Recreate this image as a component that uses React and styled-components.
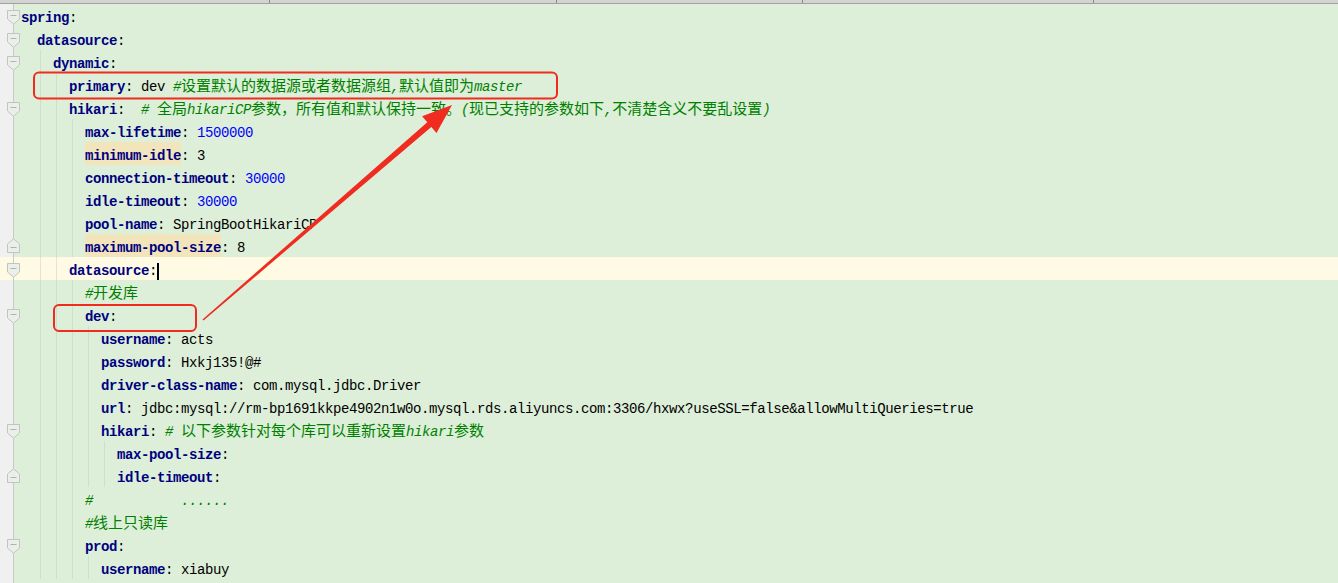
import React from 'react';
import styled, { createGlobalStyle } from 'styled-components';

const C = {
  green: '#ddefd9',
  cream: '#fefae3',
  gutter: '#f0f0f0',
  gutterLine: '#c9c9c9',
  guide: '#cde0c9',
  guideCream: '#e7e2cc',
  key: '#000080',
  num: '#0000ff',
  comment: '#008000',
  mark: '#f3e5bb',
  red: '#f02b1f',
};

const GlobalStyle = createGlobalStyle`
  *, *::before, *::after { box-sizing: border-box; }
  html, body { margin: 0; padding: 0; overflow: hidden; background: ${C.green}; }
  body { font-family: "Liberation Mono", "Noto Sans CJK SC", monospace; }
`;

const Page = styled.div`
  position: relative;
  width: 1338px;
  height: 583px;
  overflow: hidden;
  background: ${C.green};
`;

const TopBar = styled.div`
  display: flex;
  height: 4px;
  background: #d3d3d3;
  border-bottom: 1px solid #a2a2a2;
`;

const Tab = styled.div`
  flex: ${(p) => (p.$w ? 'none' : '1')};
  width: ${(p) => (p.$w ? `${p.$w}px` : 'auto')};
  border-right: ${(p) => (p.$w ? '1px solid #8a8a8a' : 'none')};
`;

const Editor = styled.div`
  display: flex;
  flex-direction: column;
`;

const Row = styled.div`
  display: flex;
  height: 23px;
  flex: none;
  background: ${(p) => (p.$current ? C.cream : C.green)};
`;

const Gutter = styled.div`
  position: relative;
  flex: none;
  width: 14px;
  background: ${(p) => (p.$current ? C.cream : C.gutter)};
  border-right: 1px solid ${C.gutterLine};
`;

const FoldMark = styled.svg`
  position: absolute;
  left: 6px;
  top: ${(p) => (p.$end ? '4px' : '6px')};
`;

const Code = styled.div`
  flex: 1;
  display: flex;
  padding-left: 7px;
`;

const Indent = styled.span`
  flex: none;
  width: 16px;
  background: ${(p) =>
    p.$guide
      ? `linear-gradient(to right, transparent 3px, ${p.$current ? C.guideCream : C.guide} 3px, ${
          p.$current ? C.guideCream : C.guide
        } 4px, transparent 4px)`
      : 'none'};
`;

const Text = styled.div`
  display: flex;
  align-items: stretch;
  font-size: 14px;
  letter-spacing: -0.4px;
  white-space: pre;
  color: #000;
`;

const Line = styled.span`
  padding-top: 6px;
  line-height: 17px;
`;

const Key = styled.span`
  color: ${C.key};
  font-weight: bold;
`;

const MarkedKey = styled.span`
  padding-top: 6px;
  line-height: 17px;
  color: ${C.key};
  font-weight: bold;
  background: ${C.mark};
`;

const Punct = styled.span`
  color: #000;
`;

const Val = styled.span`
  color: #000;
`;

const Num = styled.span`
  color: ${C.num};
`;

const Comment = styled.span`
  color: ${C.comment};
  font-style: italic;
`;

const Cjk = styled.span`
  font-family: "Noto Sans CJK SC", sans-serif;
  font-size: 15px;
  font-style: normal;
  letter-spacing: 0;
  line-height: 0;
`;

const Caret = styled.span`
  display: inline-block;
  width: 2px;
  height: 17px;
  background: #000;
  vertical-align: -5px;
`;

const Overlay = styled.svg`
  position: absolute;
  left: 0;
  top: 0;
  pointer-events: none;
`;

const CJK_RE = /([\u2E80-\u9FFF\u3000-\u303F\uFF00-\uFFEF]+)/;

function renderComment(text) {
  return text
    .split(CJK_RE)
    .filter(Boolean)
    .map((s, i) => (CJK_RE.test(s) ? <Cjk key={i}>{s}</Cjk> : <React.Fragment key={i}>{s}</React.Fragment>));
}

const rows = [
  { n: 0, f: 's', p: [['k', 'spring'], ['p', ':']] },
  { n: 2, f: 's', p: [['k', 'datasource'], ['p', ':']] },
  { n: 4, f: 's', p: [['k', 'dynamic'], ['p', ':']] },
  { n: 6, p: [['k', 'primary'], ['p', ': '], ['v', 'dev '], ['c', '#设置默认的数据源或者数据源组,默认值即为master']] },
  { n: 6, f: 's', p: [['k', 'hikari'], ['p', ':  '], ['c', '# 全局hikariCP参数，所有值和默认保持一致。(现已支持的参数如下,不清楚含义不要乱设置)']] },
  { n: 8, p: [['k', 'max-lifetime'], ['p', ': '], ['d', '1500000']] },
  { n: 8, mark: 'minimum-idle', p: [['p', ': '], ['v', '3']] },
  { n: 8, p: [['k', 'connection-timeout'], ['p', ': '], ['d', '30000']] },
  { n: 8, p: [['k', 'idle-timeout'], ['p', ': '], ['d', '30000']] },
  { n: 8, p: [['k', 'pool-name'], ['p', ': '], ['v', 'SpringBootHikariCP']] },
  { n: 8, f: 'e', mark: 'maximum-pool-size', p: [['p', ': '], ['v', '8']] },
  { n: 6, f: 's', current: true, p: [['k', 'datasource'], ['p', ':'], ['caret']] },
  { n: 8, p: [['c', '#开发库']] },
  { n: 8, f: 's', p: [['k', 'dev'], ['p', ':']] },
  { n: 10, p: [['k', 'username'], ['p', ': '], ['v', 'acts']] },
  { n: 10, p: [['k', 'password'], ['p', ': '], ['v', 'Hxkj135!@#']] },
  { n: 10, p: [['k', 'driver-class-name'], ['p', ': '], ['v', 'com.mysql.jdbc.Driver']] },
  {
    n: 10,
    p: [
      ['k', 'url'],
      ['p', ': '],
      ['v', 'jdbc:mysql://rm-bp1691kkpe4902n1w0o.mysql.rds.aliyuncs.com:3306/hxwx?useSSL=false&allowMultiQueries=true'],
    ],
  },
  { n: 10, f: 's', p: [['k', 'hikari'], ['p', ': '], ['c', '# 以下参数针对每个库可以重新设置hikari参数']] },
  { n: 12, p: [['k', 'max-pool-size'], ['p', ':']] },
  { n: 12, f: 'e', p: [['k', 'idle-timeout'], ['p', ':']] },
  { n: 8, p: [['c', '#           ......']] },
  { n: 8, p: [['c', '#线上只读库']] },
  { n: 8, f: 's', p: [['k', 'prod'], ['p', ':']] },
  { n: 10, p: [['k', 'username'], ['p', ': '], ['v', 'xiabuy']] },
  { n: 0, p: [] },
];

function FoldIcon({ end }) {
  return (
    <FoldMark $end={end} width="15" height="15" viewBox="0 0 15 15">
      {end ? (
        <path d="M1.5 14.5H13.5V6L7.5 0.8L1.5 6Z" fill="#eaf0e8" stroke="#c3c3c3" />
      ) : (
        <path d="M1.5 0.5H13.5V9L7.5 14.2L1.5 9Z" fill="#eaf0e8" stroke="#c3c3c3" />
      )}
      <path d={end ? 'M4.5 9.5H10.5' : 'M4.5 5.5H10.5'} stroke="#b2b2b2" />
    </FoldMark>
  );
}

function Token({ t }) {
  const [type, text] = t;
  switch (type) {
    case 'k':
      return <Key>{text}</Key>;
    case 'p':
      return <Punct>{text}</Punct>;
    case 'v':
      return <Val>{text}</Val>;
    case 'd':
      return <Num>{text}</Num>;
    case 'c':
      return <Comment>{renderComment(text)}</Comment>;
    case 'caret':
      return <Caret />;
    default:
      return null;
  }
}

function CodeRow({ row }) {
  const units = Array.from({ length: row.n / 2 }, (_, i) => i);
  return (
    <Row $current={row.current}>
      <Gutter $current={row.current}>{row.f && <FoldIcon end={row.f === 'e'} />}</Gutter>
      <Code>
        {units.map((u) => (
          <Indent key={u} $guide={u >= 1} $current={row.current} />
        ))}
        <Text>
          {row.mark && <MarkedKey>{row.mark}</MarkedKey>}
          <Line>
            {row.p.map((t, i) => (
              <Token key={i} t={t} />
            ))}
          </Line>
        </Text>
      </Code>
    </Row>
  );
}

function Annotations() {
  const tail = [203, 320];
  const tip = [452, 105];
  const dx = tip[0] - tail[0];
  const dy = tip[1] - tail[1];
  const len = Math.hypot(dx, dy);
  const u = [dx / len, dy / len];
  const nn = [-u[1], u[0]];
  const headLen = 30;
  const headHalf = 11;
  const base = [tip[0] - u[0] * headLen, tip[1] - u[1] * headLen];
  const pt = (p, k, w) => `${(p[0] + nn[0] * k * w).toFixed(1)},${(p[1] + nn[1] * k * w).toFixed(1)}`;
  const points = [
    pt(tail, 1, 0.8),
    pt(base, 1, 3),
    pt(base, 1, headHalf),
    `${tip[0]},${tip[1]}`,
    pt(base, -1, headHalf),
    pt(base, -1, 3),
    pt(tail, -1, 0.8),
  ].join(' ');
  return (
    <Overlay width="1338" height="583" viewBox="0 0 1338 583">
      <rect x="34" y="72.5" width="523" height="26" rx="5" fill="none" stroke={C.red} strokeWidth="2" />
      <rect x="54" y="305" width="142" height="26" rx="5" fill="none" stroke={C.red} strokeWidth="2" />
      <polygon points={points} fill={C.red} />
    </Overlay>
  );
}

export default function App() {
  return (
    <Page>
      <GlobalStyle />
      <TopBar>
        <Tab $w={270} />
        <Tab $w={287} />
        <Tab $w={246} />
        <Tab $w={291} />
        <Tab />
      </TopBar>
      <Editor>
        {rows.map((r, i) => (
          <CodeRow key={i} row={r} />
        ))}
      </Editor>
      <Annotations />
    </Page>
  );
}
